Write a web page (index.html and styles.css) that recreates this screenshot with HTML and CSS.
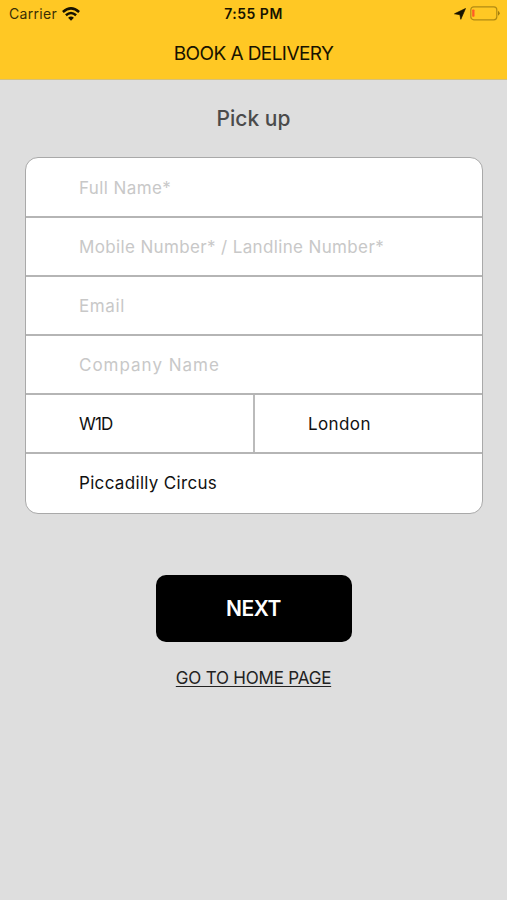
FILE: index.html
```html
<!DOCTYPE html>
<html lang="en">
<head>
<meta charset="utf-8">
<title>Book a delivery</title>
<link rel="stylesheet" href="styles.css">
</head>
<body>
<header class="header">
  <div class="status">
    <div class="status-left"><span class="carrier">Carrier</span>
      <svg class="wifi" width="18" height="14" viewBox="0 0 18 14"><g fill="none" stroke="#171300" stroke-width="2.5"><path d="M.9 5Q9-2.3 17.1 5"/><path d="M3.9 8.3Q9 3.7 14.1 8.3"/></g><path d="M6.1 10.7Q9 8.2 11.9 10.7L9 13.7Z" fill="#171300"/></svg>
    </div>
    <span class="time">7:55 PM</span>
    <div class="status-right">
      <svg width="12" height="12" viewBox="0 0 12 12"><path d="M11.5.5 6.8 11.3 5.9 6.7.5 5.8Z" fill="#171300" stroke="#171300" stroke-width=".7" stroke-linejoin="round"/></svg>
      <svg width="31" height="15" viewBox="0 0 31 15"><rect x=".8" y=".8" width="26" height="13" rx="3" fill="none" stroke="#b18a13" stroke-width="1.2"/><rect x="2.2" y="3.6" width="2.3" height="7.2" rx=".7" fill="#ff5b25"/><path d="M28 4.8Q31.4 7.3 28 9.8Z" fill="#a37d0c"/></svg>
    </div>
  </div>
  <h1 class="title"><span>BOOK A DELIVERY</span></h1>
</header>
<main class="main">
  <h2 class="subtitle"><span>Pick up</span></h2>
  <div class="form">
    <div class="row hint"><span class="t-name">Full Name*</span></div>
    <div class="row hint"><span class="t-phone">Mobile Number* / Landline Number*</span></div>
    <div class="row hint"><span class="t-email">Email</span></div>
    <div class="row hint"><span class="t-company">Company Name</span></div>
    <div class="split">
      <div class="row"><span class="t-code">W1D</span></div>
      <div class="row"><span class="t-city">London</span></div>
    </div>
    <div class="row"><span class="t-street">Piccadilly Circus</span></div>
  </div>
  <button class="next"><span>NEXT</span></button>
  <a class="home"><span>GO TO HOME PAGE</span></a>
</main>
</body>
</html>
```
FILE: styles.css
```css
* { box-sizing: border-box; }
body { margin: 0; min-height: 900px; background: #dedede; font-family: Inter, "Liberation Sans", sans-serif; color: #111; }
.header { height: 80px; background: #ffc824; border-bottom: 1px solid #d6c079; }
.status { height: 27px; padding: 0 6px 0 9px; display: grid; grid-template-columns: 1fr auto 1fr; align-items: center; font-size: 14px; line-height: 27px; color: #171300; }
.status-left, .status-right { display: flex; align-items: center; gap: 5px; }
.status-right { justify-content: flex-end; gap: 4px; }
.status svg { display: block; }
.carrier { letter-spacing: .3px; color: #3a2e05; }
.time { margin-left: -3px; font-weight: 600; letter-spacing: .5px; }
.title { margin: 0; font-size: 19px; font-weight: 400; line-height: 53px; text-align: center; letter-spacing: -.58px; color: #171300; }
.main { display: flex; flex-direction: column; align-items: center; }
.subtitle { margin: 22px 0 23px; font-size: 21px; line-height: 33px; height: 32px; font-weight: 500; color: #4b4b4b; }
.form { width: 458px; height: 357px; margin-left: 1px; border: 1px solid #a9a9a9; border-radius: 13px; background: #fff; overflow: hidden; display: grid; grid-template-rows: 58px repeat(4, 59px) 61px; }
.row { padding-left: 53px; font-size: 17px; line-height: 60px; white-space: nowrap; }
.form > * + * { border-top: 2px solid #b5b5b5; line-height: 58px; }
.split { display: grid; grid-template-columns: 227px 1fr; }
.split .row { line-height: 58px; }
.split .row + .row { border-left: 2px solid #bbb; }
.hint { color: #c8c8c8; }
.t-name { letter-spacing: .4px; }
.t-phone { letter-spacing: .36px; }
.t-email { letter-spacing: .6px; }
.t-company { letter-spacing: 1px; }
.t-code { letter-spacing: -.8px; }
.t-city { letter-spacing: .4px; }
.t-street { letter-spacing: .32px; }
.next { margin-top: 61px; width: 196px; height: 67px; padding: 0; border: 0; border-radius: 10px; background: #000; color: #fff; font: 600 21px/67px Inter, sans-serif; letter-spacing: -.5px; }
.home { margin-top: 23px; font-size: 17px; line-height: 26px; letter-spacing: -.2px; text-decoration: underline; text-underline-offset: 2px; color: #222; }
```
